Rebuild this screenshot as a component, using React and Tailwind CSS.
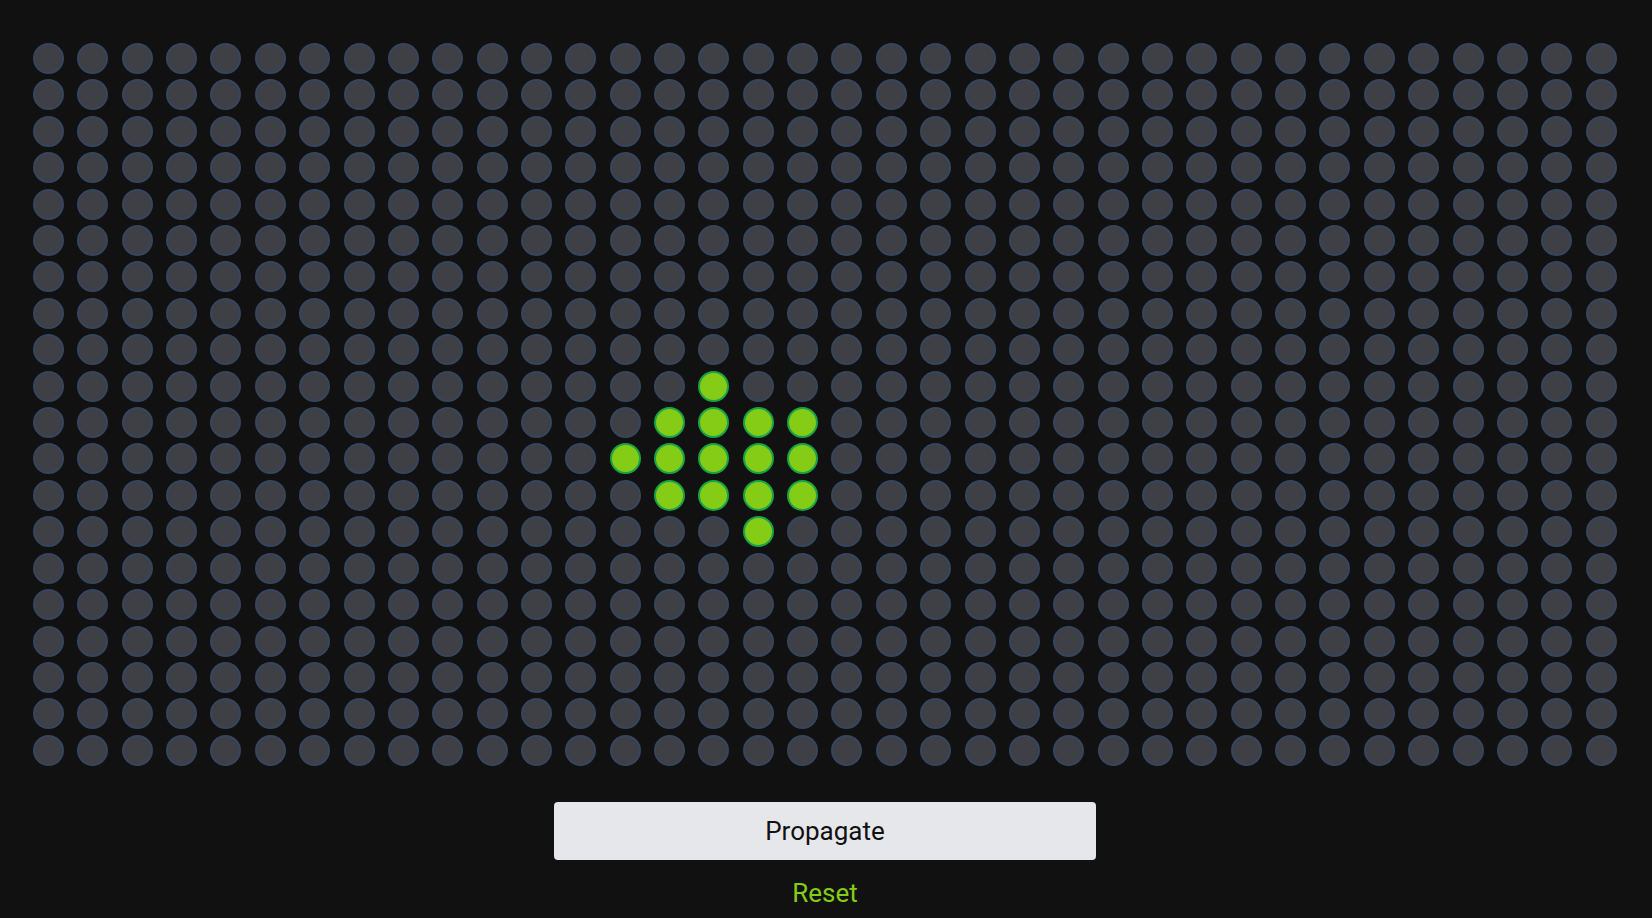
import React from "react";

const ROWS = 20;
const COLS = 36;
const active = new Set([
  "9-15",
  "10-14", "10-15", "10-16", "10-17",
  "11-13", "11-14", "11-15", "11-16", "11-17",
  "12-14", "12-15", "12-16", "12-17",
  "13-16",
]);

export default function App() {
  return (
    <div
      className="w-[1652px] h-[918px] bg-[#111111] flex flex-col items-center overflow-hidden"
      style={{ fontFamily: "Roboto, 'Liberation Sans', sans-serif" }}
    >
      <div className="mt-[43px] self-start ml-[33px] w-[1584px] h-[723px] flex flex-col justify-between">
        {Array.from({ length: ROWS }).map((_, r) => (
          <div key={r} className="flex justify-between">
            {Array.from({ length: COLS }).map((_, c) => {
              const on = active.has(`${r}-${c}`);
              return (
                <div
                  key={c}
                  className={
                    on
                      ? "w-[31px] h-[31px] rounded-full bg-[#84cc16] border-2 border-[#16a34a]"
                      : "w-[31px] h-[31px] rounded-full bg-[#3f3f46] border-2 border-[#36465f]"
                  }
                />
              );
            })}
          </div>
        ))}
      </div>
      <div className="self-start ml-[554px] w-[542px] flex flex-col items-center">
        <button className="mt-[36px] w-[542px] h-[58px] rounded bg-[#e5e7eb] text-[#111111] text-[26px] flex items-center justify-center">
          Propagate
        </button>
        <div className="mt-[14px] text-[26px] text-[#84cc16]">Reset</div>
      </div>
    </div>
  );
}
